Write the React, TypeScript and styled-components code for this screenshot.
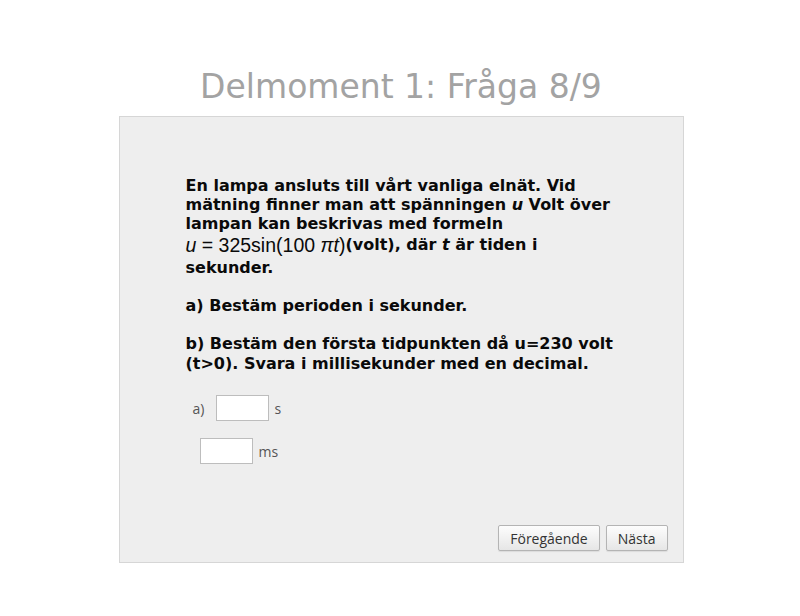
import * as React from "react";
import styled, { createGlobalStyle } from "styled-components";

const GlobalStyle = createGlobalStyle`
  html, body {
    margin: 0;
    padding: 0;
    background: #ffffff;
  }
`;

const Page = styled.div`
  width: 800px;
  height: 616px;
  display: flex;
  flex-direction: column;
  align-items: center;
  padding-top: 65px;
  box-sizing: border-box;
`;

const Title = styled.h1`
  font-family: "DejaVu Sans", Verdana, sans-serif;
  font-size: 33px;
  font-weight: 400;
  color: #a3a3a3;
  margin: 0 0 8px 2px;
  line-height: 43px;
`;

const Panel = styled.div`
  width: 565px;
  height: 447px;
  box-sizing: border-box;
  margin-left: 2px;
  background: #eeeeee;
  border: 1px solid #d6d6d6;
  display: flex;
  flex-direction: column;
  padding: 59px 15px 11px 66px;
`;

// line breaks follow the original layout of the question text
const Question = styled.div`
  width: 450px;
  font-family: "DejaVu Sans", Verdana, sans-serif;
  font-size: 16px;
  font-weight: 700;
  line-height: 19px;
  color: #0a0a0a;
  white-space: nowrap;
`;

const Para = styled.p<{ $gap?: number }>`
  margin: 0 0 ${({ $gap }) => $gap ?? 19}px 0;
`;

const BLine = styled.span`
  display: inline-block;
  line-height: 20px;
`;

const MathLine = styled.span`
  display: inline-block;
  font-family: "Liberation Sans", Arial, sans-serif;
  font-weight: 400;
  font-size: 19.5px;
  line-height: 25px;
  vertical-align: -2px;
`;

const Var = styled.i`
  font-style: italic;
`;

const Answers = styled.div`
  display: flex;
  flex-direction: column;
  gap: 17px;
  margin-top: 1px;
  font-family: "Open Sans", "Noto Sans", sans-serif;
  font-size: 14px;
  color: #555555;
`;

const Row = styled.div<{ $indent: number }>`
  display: flex;
  align-items: center;
  padding-left: ${({ $indent }) => $indent}px;
`;

const Label = styled.span`
  width: 23px;
`;

const Field = styled.input`
  width: 53px;
  height: 26px;
  box-sizing: border-box;
  border: 1px solid #bdbdbd;
  background: #ffffff;
  margin: 0 6px 0 0;
  padding: 0 4px;
  font-family: inherit;
`;

const Footer = styled.div`
  margin-top: auto;
  display: flex;
  justify-content: flex-end;
  gap: 6px;
`;

const NavButton = styled.button`
  height: 26px;
  padding: 0 11px;
  font-family: "Open Sans", "Noto Sans", sans-serif;
  font-size: 14px;
  color: #333333;
  background: linear-gradient(#fdfdfd, #e6e6e6);
  border: 1px solid #b4b4b4;
  border-radius: 2px;
  box-shadow: 0 1px 1px rgba(0, 0, 0, 0.08);
  cursor: pointer;
`;

export default function App() {
  return (
    <>
      <GlobalStyle />
      <Page>
        <Title>Delmoment 1: Fråga 8/9</Title>
        <Panel>
          <Question>
            <Para>
              En lampa ansluts till vårt vanliga elnät. Vid
              <br />
              mätning finner man att spänningen <i>u</i> Volt över
              <br />
              lampan kan beskrivas med formeln
              <br />
              <MathLine>
                <Var>u</Var> = 325sin(100 <Var>πt</Var>)
              </MathLine>
              (volt), där <i>t</i> är tiden i
              <br />
              sekunder.
            </Para>
            <Para>a) Bestäm perioden i sekunder.</Para>
            <Para $gap={20}>
              <BLine>b) Bestäm den första tidpunkten då u=230 volt</BLine>
              <br />
              <BLine>(t&gt;0). Svara i millisekunder med en decimal.</BLine>
            </Para>
          </Question>
          <Answers>
            <Row $indent={7}>
              <Label>a)</Label>
              <Field type="text" />
              <span>s</span>
            </Row>
            <Row $indent={14}>
              <Field type="text" />
              <span>ms</span>
            </Row>
          </Answers>
          <Footer>
            <NavButton>Föregående</NavButton>
            <NavButton>Nästa</NavButton>
          </Footer>
        </Panel>
      </Page>
    </>
  );
}
